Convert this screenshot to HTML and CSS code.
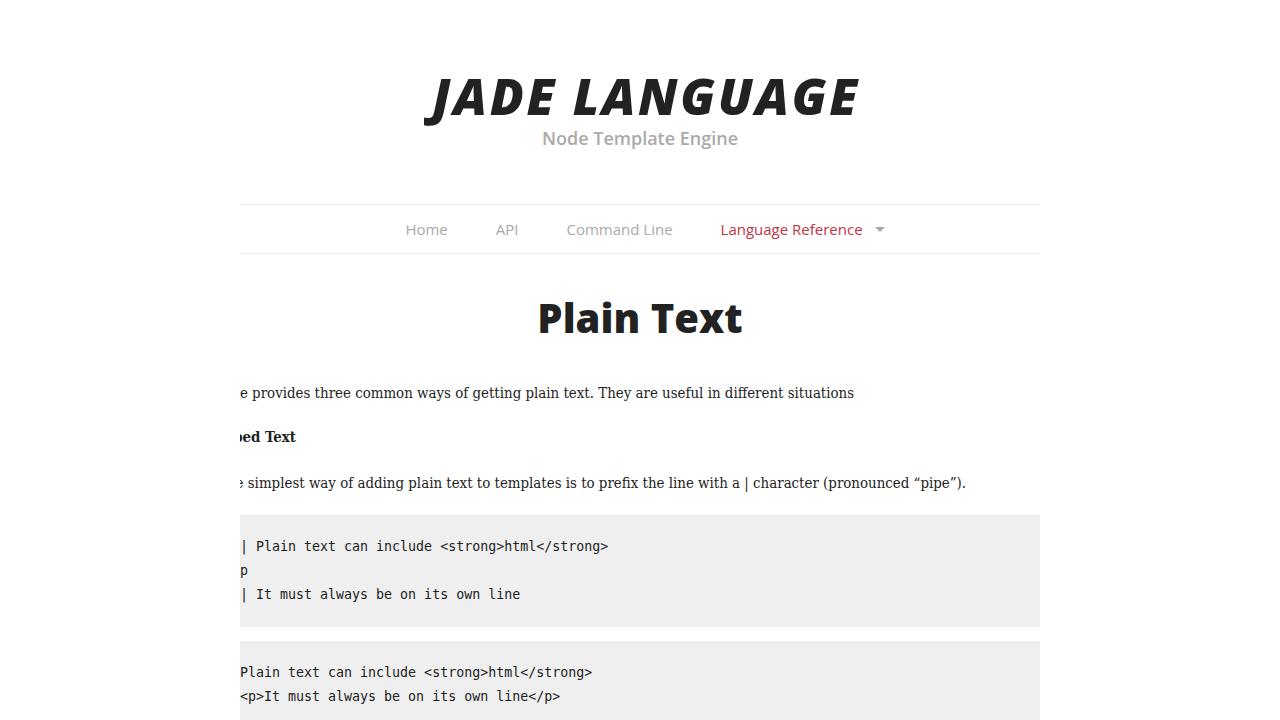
FILE: index.html
```html
<!DOCTYPE html>
<html lang="en">
<head>
<meta charset="utf-8">
<title>Jade Language - Plain Text</title>
<link rel="stylesheet" href="styles.css">
</head>
<body>
<div class="page">
  <header class="masthead">
    <h1 class="brand">JADE LANGUAGE</h1>
    <div class="tagline">Node Template Engine</div>
  </header>
  <nav class="nav">
    <a class="nav-link" href="#">Home</a>
    <a class="nav-link" href="#">API</a>
    <a class="nav-link" href="#">Command Line</a>
    <a class="nav-link active" href="#">Language Reference<span class="caret"></span></a>
  </nav>
  <h2 class="page-title">Plain Text</h2>
  <div class="content">
    <div class="content-inner">
      <p class="para">Jade provides three common ways of getting plain text. They are useful in different situations</p>
      <h3 class="section-title">Piped Text</h3>
      <p class="para">The simplest way of adding plain text to templates is to prefix the line with a | character (pronounced “pipe”).</p>
      <pre class="code">| Plain text can include &lt;strong&gt;html&lt;/strong&gt;
p
| It must always be on its own line</pre>
      <pre class="code">Plain text can include &lt;strong&gt;html&lt;/strong&gt;
&lt;p&gt;It must always be on its own line&lt;/p&gt;</pre>
    </div>
  </div>
</div>
</body>
</html>
```
FILE: styles.css
```css
html, body {
  margin: 0;
  padding: 0;
  background: #fff;
}
body {
  font-family: "DejaVu Serif", "Liberation Serif", serif;
  color: #222;
}
.page {
  width: 800px;
  margin: 0 auto;
}
.masthead {
  display: flex;
  flex-direction: column;
  align-items: center;
  padding-top: 74px;
  box-sizing: border-box;
  height: 204px;
}
.brand {
  margin: 0;
  padding-left: 12px;
  font-family: "Open Sans", sans-serif;
  font-weight: 800;
  font-style: italic;
  font-size: 50px;
  line-height: 44px;
  color: #222;
  letter-spacing: 2.6px;
}
.tagline {
  font-family: "Open Sans", sans-serif;
  font-weight: 600;
  font-size: 18px;
  line-height: 24px;
  color: #aaa;
  margin-top: 8px;
}
.nav {
  display: flex;
  justify-content: center;
  align-items: center;
  height: 48px;
  border-top: 1px solid #eee;
  border-bottom: 1px solid #eee;
  font-family: "Open Sans", sans-serif;
  font-weight: 400;
  font-size: 15px;
  padding-left: 10px;
}
.nav-link {
  color: #aaa;
  text-decoration: none;
  padding: 0 24px;
  display: flex;
  align-items: center;
}
.nav-link.active {
  color: #c0343f;
}
.caret {
  display: inline-block;
  width: 0;
  height: 0;
  border-left: 5px solid transparent;
  border-right: 5px solid transparent;
  border-top: 5px solid #aaa;
  margin-left: 12px;
  margin-top: 1px;
}
.page-title {
  margin: 40px 0 0;
  text-align: center;
  font-family: "Open Sans", sans-serif;
  font-weight: 800;
  font-size: 40px;
  line-height: 48px;
  color: #222;
}
.content {
  overflow: hidden;
  margin-top: 40px;
}
.content-inner {
  margin-left: -22px;
}
.para {
  margin: 0 0 22px;
  font-stretch: condensed;
  font-size: 14.9px;
  line-height: 22px;
  white-space: nowrap;
}
.section-title {
  margin: 2px 0 24px;
  font-stretch: condensed;
  font-weight: bold;
  font-size: 14.9px;
  line-height: 22px;
}
.section-title + .para {
  margin-bottom: 21px;
}
.code {
  margin: 0 0 14px;
  padding: 20px 20px 20px 22px;
  background: #efefef;
  font-family: "DejaVu Sans Mono", "Liberation Mono", monospace;
  font-size: 13.3px;
  line-height: 24px;
  color: #222;
}
```
